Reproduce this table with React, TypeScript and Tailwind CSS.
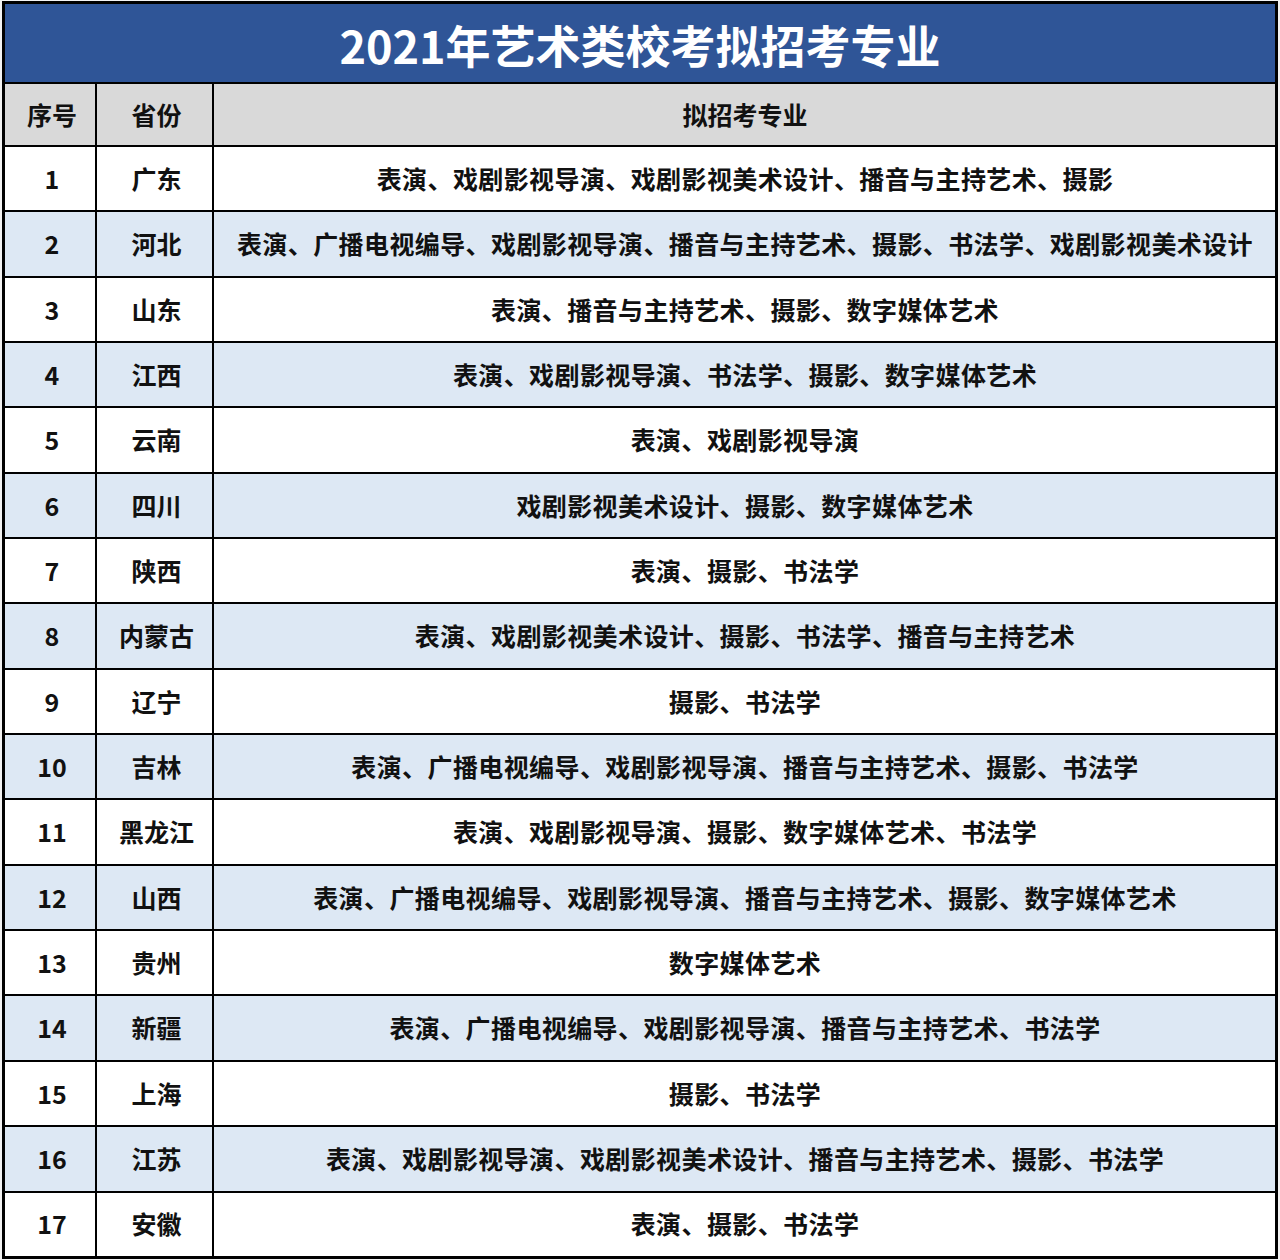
// 2021 年艺术类校考拟招考专业一览表
const rows: [string, string][] = [
  ["广东", "表演、戏剧影视导演、戏剧影视美术设计、播音与主持艺术、摄影"],
  ["河北", "表演、广播电视编导、戏剧影视导演、播音与主持艺术、摄影、书法学、戏剧影视美术设计"],
  ["山东", "表演、播音与主持艺术、摄影、数字媒体艺术"],
  ["江西", "表演、戏剧影视导演、书法学、摄影、数字媒体艺术"],
  ["云南", "表演、戏剧影视导演"],
  ["四川", "戏剧影视美术设计、摄影、数字媒体艺术"],
  ["陕西", "表演、摄影、书法学"],
  ["内蒙古", "表演、戏剧影视美术设计、摄影、书法学、播音与主持艺术"],
  ["辽宁", "摄影、书法学"],
  ["吉林", "表演、广播电视编导、戏剧影视导演、播音与主持艺术、摄影、书法学"],
  ["黑龙江", "表演、戏剧影视导演、摄影、数字媒体艺术、书法学"],
  ["山西", "表演、广播电视编导、戏剧影视导演、播音与主持艺术、摄影、数字媒体艺术"],
  ["贵州", "数字媒体艺术"],
  ["新疆", "表演、广播电视编导、戏剧影视导演、播音与主持艺术、书法学"],
  ["上海", "摄影、书法学"],
  ["江苏", "表演、戏剧影视导演、戏剧影视美术设计、播音与主持艺术、摄影、书法学"],
  ["安徽", "表演、摄影、书法学"],
];

function Row({
  no,
  province,
  majors,
  bg,
}: {
  no: string;
  province: string;
  majors: string;
  bg: string;
}) {
  return (
    <div className={`flex h-[65.35px] border-t-2 border-black ${bg}`}>
      <div className="flex w-[90px] items-center justify-center pl-[4px]">{no}</div>
      <div className="flex w-[117px] items-center justify-center border-l-2 border-black pl-[4px]">
        {province}
      </div>
      <div className="flex flex-1 items-center justify-center border-l-2 border-black pl-[1px] tracking-[0.4px]">
        {majors}
      </div>
    </div>
  );
}

export default function App() {
  return (
    <div className="h-[1260px] w-[1280px] bg-[#f2f2f2] pt-[1px] pl-[2px]">
      <div
        className="w-[1276px] border-[3px] border-black bg-white text-[25px] font-bold text-[#111]"
        style={{ fontFamily: '"Noto Sans CJK SC", "Noto Sans", sans-serif' }}
      >
        <div className="flex h-[78px] items-center justify-center bg-[#2f5597] pt-[3px] text-[45px] text-white">
          2021年艺术类校考拟招考专业
        </div>
        <div className="flex h-[63px] border-t-2 border-black bg-[#d9d9d9]">
          <div className="flex w-[90px] items-center justify-center pl-[4px]">序号</div>
          <div className="flex w-[117px] items-center justify-center border-l-2 border-black pl-[4px]">
            省份
          </div>
          <div className="flex flex-1 items-center justify-center border-l-2 border-black pl-[1px]">
            拟招考专业
          </div>
        </div>
        {rows.map(([province, majors], i) => (
          <Row
            key={province}
            no={String(i + 1)}
            province={province}
            majors={majors}
            bg={i % 2 === 1 ? "bg-[#dde8f4]" : "bg-white"}
          />
        ))}
      </div>
    </div>
  );
}
